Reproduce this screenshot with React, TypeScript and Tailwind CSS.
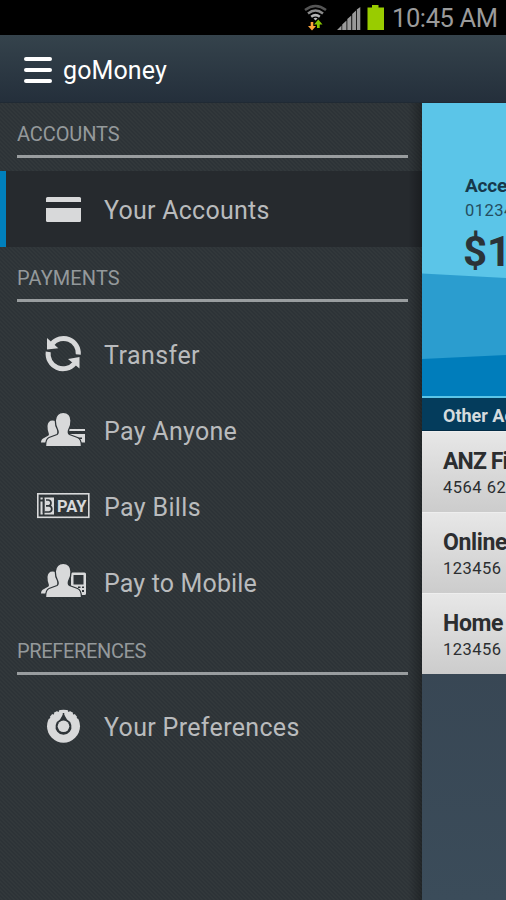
import type { ReactNode } from 'react';

const ICON = '#d8d9da';
const BACK = '#2e3438';

function CardIcon() {
  return (
    <svg width="70" height="50" viewBox="0 1 70 50" fill={ICON}>
      <path d="M16 16.500Q16 15 17.500 15H49.500Q51 15 51 16.500V20H16Z" />
      <path d="M16 26H51V38.500Q51 40 49.500 40H17.500Q16 40 16 38.500Z" />
    </svg>
  );
}

function TransferIcon() {
  return (
    <svg width="70" height="50" viewBox="0 -1.500 70 50">
      <g fill="none" stroke={ICON} strokeWidth="5">
        <path d="M22 14.500A14.800 14.800 0 0 1 48.300 25" />
        <path d="M18.200 22.300A15 15 0 0 0 44.500 34" />
      </g>
      <path fill={ICON} d="M17 8.500V20L28.300 18.800ZM49.500 27.500V39L38 29.500Z" />
    </svg>
  );
}

function People() {
  return (
    <>
      <path
        fill={ICON}
        d="M11 37.500Q11 34 14 33L18.500 30.500Q19.500 29.500 18.500 27.500Q17.500 25 17.500 21Q18 15.500 22.500 15.500Q27 15.500 27.500 20V37.500Z"
      />
      <path
        fill={ICON}
        stroke={BACK}
        strokeWidth="1.300"
        d="M15.500 41.700Q15.500 34 19 32.500L27 29.500Q29 28 27.500 24.500Q25.300 21 25.300 15.500Q26 7.300 33.200 7.300Q40.700 7.300 41 15.500Q41.200 21 38.800 24.500Q37.500 28 39.500 29.500L47.500 32.500Q51.500 34 51.500 41.700Z"
      />
    </>
  );
}

function PayAnyoneIcon() {
  return (
    <svg width="70" height="50" viewBox="0 -1 70 50">
      <path fill={ICON} d="M37 24H55V26H37ZM37 29H55V37.500H37Z" />
      <path fill={BACK} d="M48 32.500H52V34H48Z" />
      <People />
    </svg>
  );
}

function PayMobileIcon() {
  return (
    <svg width="70" height="50" viewBox="0 0 70 50">
      <rect x="41" y="16.500" width="15" height="22.500" rx="1.500" fill={ICON} />
      <path fill={BACK} d="M43.500 19H53.500V28.500H43.500ZM48 30.500H50.500V32H48ZM52 30.500H54V32H52ZM52 34H54V36H52ZM48 34H50V36H48Z" />
      <People />
    </svg>
  );
}

function BpayIcon() {
  return (
    <svg width="70" height="50" viewBox="0 0 70 50">
      <rect x="7.800" y="13.800" width="51" height="23.500" fill="none" stroke={ICON} strokeWidth="1.600" />
      <path fill={ICON} d="M14.500 17.500H24V34.500H14.500ZM10.500 21.500H12.700V34.500H10.500ZM10.500 17.500H12.700V19.500H10.500Z" />
      <g fill="none" stroke={BACK} strokeWidth="1.700">
        <path d="M13.600 19V33" />
        <path d="M16 25.800H19.200Q21.800 26.300 21.800 29Q21.800 31.800 19 32H14.500M16 20H18.500Q21 20.500 21 23Q21 25.300 18.800 25.800" />
      </g>
      <text x="27" y="31.700" fill={ICON} fontFamily="Roboto, sans-serif" fontWeight="700" fontSize="17" textLength="29.500" lengthAdjust="spacingAndGlyphs">
        PAY
      </text>
    </svg>
  );
}

function PreferencesIcon() {
  return (
    <svg width="70" height="50" viewBox="0 1 70 50">
      <circle cx="33.500" cy="26.200" r="16.500" fill={ICON} />
      <g stroke={BACK} strokeWidth="1.500">
        <path d="M33.500 13V17M27.700 9L28.400 11.800M39.300 9L38.600 11.800M22.300 12.200L23.700 14.200M44.700 12.200L43.300 14.200M18.300 17L20 18M48.700 17L47 18" />
      </g>
      <path fill={BACK} d="M33.500 13.500L37 19.500A8 8 0 1 1 30 19.500Z" />
      <circle cx="33.500" cy="26.300" r="5.800" fill={ICON} />
    </svg>
  );
}

function Heading({ children, className }: { children: ReactNode; className: string }) {
  return (
    <div className={`shrink-0 pl-[17px] pr-[14px] pt-[17px] ${className}`}>
      <div className="h-[35px] text-[20px] leading-[28px] text-[#94999b]">{children}</div>
      <div className="h-[3px] bg-[#999d9f]" />
    </div>
  );
}

function Item({ icon, label, spacing, active = false }: { icon: ReactNode; label: string; spacing: string; active?: boolean }) {
  return (
    <div
      className={`flex h-[76px] shrink-0 items-center border-l-[6px] pl-[24px] ${
        active ? 'border-[#0080bd] bg-[#262a2e]' : 'border-transparent'
      }`}
    >
      <span className="mt-[-2px] w-[70px] shrink-0">{icon}</span>
      <span className={`ml-[4px] whitespace-nowrap text-[25px] leading-[30px] text-[#b9bbbd] ${spacing}`}>{label}</span>
    </div>
  );
}

function Account({ name, number, spacing }: { name: string; number: string; spacing: string }) {
  return (
    <div className="h-[81px] shrink-0 border-t border-[#eeeeee] bg-linear-to-b from-[#e7e7e7] to-[#cccccc] pl-[21px] pt-[15px] text-[#2c2e30]">
      <div className={`whitespace-nowrap text-[23px] font-bold leading-[30px] ${spacing}`}>{name}</div>
      <div className="whitespace-nowrap text-[16.500px] leading-[21px] tracking-[0.500px]">{number}</div>
    </div>
  );
}

function StatusBar() {
  return (
    <div className="flex h-[35px] shrink-0 items-center justify-end bg-black pr-[6px]">
      <svg width="90" height="35" viewBox="0 0 90 35" className="shrink-0">
        <g fill="none" strokeWidth="2.500">
          <path stroke="#555" d="M7 10Q17.500 2 28 10" />
          <path stroke="#8a8a8a" d="M10 13.500Q17.500 7.500 25 13.500" />
          <path stroke="#b5b5b5" d="M13.200 16.800Q17.500 13.500 21.800 16.800" />
        </g>
        <path fill="#bbb" d="M15.500 18.500Q17.500 17 19.500 18.500L17.500 20.500Z" />
        <path fill="#ffa53c" d="M12.700 22H15.300V26H18L14 30.500L10 26H12.700Z" />
        <path fill="#86c400" d="M19 28V24.500H16L20.300 19.500L24.500 24.500H21.700V28Z" />
        <path fill="#999" d="M39 30L43.500 25.500V30ZM44.200 30V24.500L48.500 20.500V30ZM49.300 30V19L53.300 15.500V30ZM54.200 30V14L58 10.500V30ZM58.800 30V9.500L62.300 7V30Z" />
        <path fill="#99cc00" d="M74 5H80.500V7.500H86V30H69.500V7.500H74Z" />
      </svg>
      <span className="ml-[4px] w-[108px] whitespace-nowrap text-[25.500px] leading-[34px] tracking-[-0.400px] text-[#9b9b9b]">10:45 AM</span>
    </div>
  );
}

export default function App() {
  return (
    <div className="flex h-[900px] w-[506px] flex-col overflow-hidden bg-black font-[Roboto,sans-serif]">
      <StatusBar />
      <header className="flex h-[68px] shrink-0 items-center border-b border-[#202a34] bg-linear-to-b from-[#35434c] to-[#242f3b] pl-[24px]">
        <div className="mt-[2px] flex w-[28px] flex-col gap-[7px]">
          <i className="h-[4px] rounded-full bg-white" />
          <i className="h-[4px] rounded-full bg-white" />
          <i className="h-[4px] rounded-full bg-white" />
        </div>
        <span className="ml-[11px] mt-[4px] text-[25px] leading-[30px] tracking-[0.100px] text-white">goMoney</span>
      </header>
      <div className="flex min-h-0 flex-1">
        <nav className="relative flex w-[422px] shrink-0 flex-col bg-[#2f3538] bg-[repeating-linear-gradient(45deg,#2d3337_0px,#2d3337_1.414px,#32383b_1.414px,#32383b_2.828px)]">
          <Heading className="h-[68px] tracking-[-0.100px]">ACCOUNTS</Heading>
          <Item active icon={<CardIcon />} label="Your Accounts" spacing="mt-[4px] tracking-[0.250px]" />
          <Heading className="h-[69px] tracking-[0.120px]">PAYMENTS</Heading>
          <Item icon={<TransferIcon />} label="Transfer" spacing="mt-[3px] tracking-[0.450px]" />
          <Item icon={<PayAnyoneIcon />} label="Pay Anyone" spacing="mt-[4px] tracking-[0.300px]" />
          <Item icon={<BpayIcon />} label="Pay Bills" spacing="mt-[4px] tracking-[0.350px]" />
          <Item icon={<PayMobileIcon />} label="Pay to Mobile" spacing="mt-[4px] tracking-[0.150px]" />
          <Heading className="h-[69px] tracking-[-0.350px]">PREFERENCES</Heading>
          <Item icon={<PreferencesIcon />} label="Your Preferences" spacing="mt-[2px] tracking-[0.330px]" />
          <div className="absolute inset-y-0 right-0 w-[14px] bg-linear-to-r from-transparent to-black/30" />
        </nav>
        <main className="flex min-w-0 flex-1 flex-col overflow-hidden bg-linear-to-b from-[#364350] via-[#364350] to-[#3b4c5a]">
          <section className="relative h-[295px] shrink-0 border-b-2 border-[#5bc5e8] bg-[#5bc5e8]">
            <svg width="84" height="293" viewBox="0 0 84 293" className="absolute left-0 top-0">
              <path fill="#2b9dcf" d="M0 170.500L84 175V293H0Z" />
              <path fill="#007dbb" d="M0 256L84 252V293H0Z" />
            </svg>
            <div className="relative pl-[43px] pt-[71px]">
              <div className="whitespace-nowrap text-[19px] font-bold leading-[24px] tracking-[-0.200px] text-[#16394c]">Acce</div>
              <div className="whitespace-nowrap text-[16.500px] leading-[26px] tracking-[0.500px] text-[#244d60]">01234</div>
              <div className="ml-[-2px] whitespace-nowrap text-[42px] font-bold leading-[55px] text-[#2b3338]">$1</div>
            </div>
          </section>
          <div className="h-[33px] shrink-0 whitespace-nowrap border-b border-[#032b45] bg-[#043c5c] pl-[21px] text-[18px] font-bold leading-[35px] text-[#d5dbde]">
            Other Ac
          </div>
          <Account name="ANZ Fi" number="4564 62" spacing="tracking-[-0.900px]" />
          <Account name="Online" number="123456" spacing="tracking-[-0.350px]" />
          <Account name="Home" number="123456" spacing="tracking-[-0.350px]" />
        </main>
      </div>
    </div>
  );
}
